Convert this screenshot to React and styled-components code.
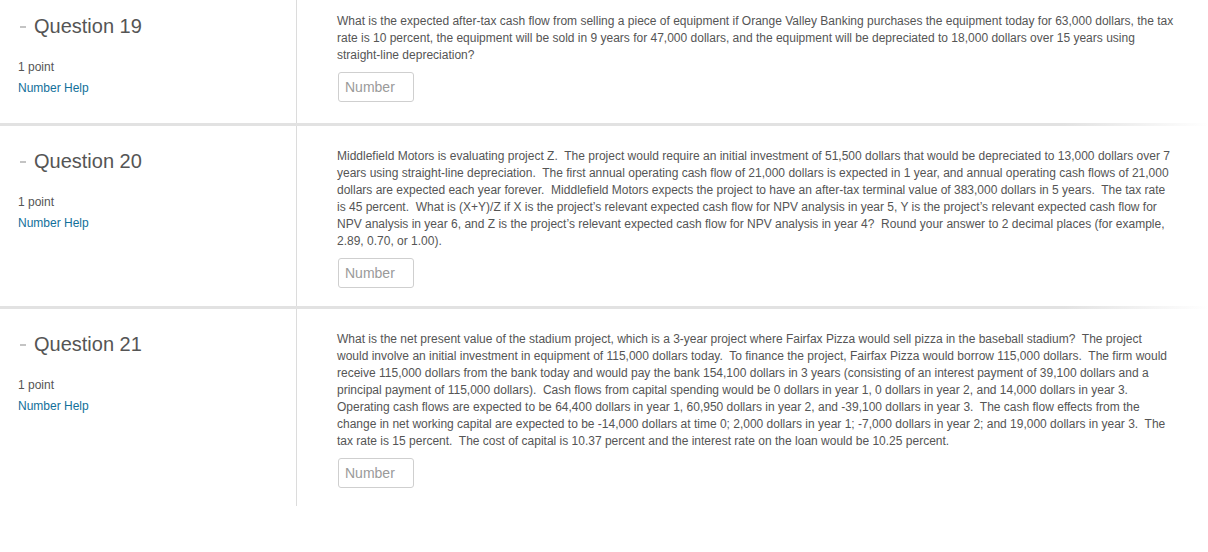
import React from 'react'
import styled, { createGlobalStyle } from 'styled-components'

const Global = createGlobalStyle`
  html, body {
    margin: 0;
    padding: 0;
    background: #fff;
  }
  body {
    font-family: "Liberation Sans", Arial, Helvetica, sans-serif;
    color: #555;
  }
`

const Page = styled.div`
  width: 1208px;
  height: 552px;
  overflow: hidden;
  background: #fff;
`
const Section = styled.div`
  display: flex;
`
const Separator = styled.div`
  height: 3px;
  background: linear-gradient(
    to right,
    #e2e2e2 0%,
    #e2e2e2 88%,
    #f3f3f3 95%,
    #fff 100%
  );
`
const Side = styled.div`
  width: 278px;
  flex: none;
  padding: ${p => (p.first ? '14px' : '23px')} 0 0 18px;
  border-right: 1px solid #dcdcdc;
`
const Title = styled.h2`
  margin: 0;
  font-size: 20px;
  line-height: 24px;
  font-weight: normal;
  color: #555;
  display: flex;
  align-items: center;
`
const Dash = styled.span`
  display: inline-block;
  width: 6px;
  height: 2px;
  margin: 1px 8px 0 2px;
  background: #c4c4c4;
`
const Points = styled.div`
  margin-top: 21px;
  font-size: 12px;
  line-height: 17px;
  color: #555;
`
const HelpLink = styled.a`
  display: block;
  margin-top: 4px;
  font-size: 12px;
  line-height: 17px;
  color: #12709a;
  text-decoration: none;
`
const Body = styled.div`
  padding: ${p => (p.first ? '13px' : '22px')} 0 ${p => (p.first ? '21px' : '18px')} 40px;
`
const Prompt = styled.p`
  margin: 0;
  width: 838px;
  font-size: 12px;
  line-height: 17px;
  color: #555;
  white-space: pre-wrap;
`
const NumberInput = styled.input`
  display: block;
  box-sizing: border-box;
  margin: 8px 0 0 1px;
  width: 76px;
  height: 30px;
  padding: 0 6px;
  border: 1px solid #cfcfcf;
  border-radius: 3px;
  font-family: inherit;
  font-size: 14px;
  color: #555;
  &::placeholder {
    color: #9a9a9a;
  }
`

const questions = [
  {
    n: 19,
    text:
      'What is the expected after-tax cash flow from selling a piece of equipment if Orange Valley Banking purchases the equipment today for 63,000 dollars, the tax rate is 10 percent, the equipment will be sold in 9 years for 47,000 dollars, and the equipment will be depreciated to 18,000 dollars over 15 years using straight-line depreciation?'
  },
  {
    n: 20,
    text:
      'Middlefield Motors is evaluating project Z.  The project would require an initial investment of 51,500 dollars that would be depreciated to 13,000 dollars over 7 years using straight-line depreciation.  The first annual operating cash flow of 21,000 dollars is expected in 1 year, and annual operating cash flows of 21,000 dollars are expected each year forever.  Middlefield Motors expects the project to have an after-tax terminal value of 383,000 dollars in 5 years.  The tax rate is 45 percent.  What is (X+Y)/Z if X is the project’s relevant expected cash flow for NPV analysis in year 5, Y is the project’s relevant expected cash flow for NPV analysis in year 6, and Z is the project’s relevant expected cash flow for NPV analysis in year 4?  Round your answer to 2 decimal places (for example, 2.89, 0.70, or 1.00).'
  },
  {
    n: 21,
    text:
      'What is the net present value of the stadium project, which is a 3-year project where Fairfax Pizza would sell pizza in the baseball stadium?  The project would involve an initial investment in equipment of 115,000 dollars today.  To finance the project, Fairfax Pizza would borrow 115,000 dollars.  The firm would receive 115,000 dollars from the bank today and would pay the bank 154,100 dollars in 3 years (consisting of an interest payment of 39,100 dollars and a principal payment of 115,000 dollars).  Cash flows from capital spending would be 0 dollars in year 1, 0 dollars in year 2, and 14,000 dollars in year 3.  Operating cash flows are expected to be 64,400 dollars in year 1, 60,950 dollars in year 2, and -39,100 dollars in year 3.  The cash flow effects from the change in net working capital are expected to be -14,000 dollars at time 0; 2,000 dollars in year 1; -7,000 dollars in year 2; and 19,000 dollars in year 3.  The tax rate is 15 percent.  The cost of capital is 10.37 percent and the interest rate on the loan would be 10.25 percent.'
  }
]

const Question = ({ n, text, first }) => (
  <Section>
    <Side first={first}>
      <Title>
        <Dash />
        Question {n}
      </Title>
      <Points>1 point</Points>
      <HelpLink href='#'>Number Help</HelpLink>
    </Side>
    <Body first={first}>
      <Prompt>{text}</Prompt>
      <NumberInput type='text' placeholder='Number' />
    </Body>
  </Section>
)

export default function App () {
  return (
    <>
      <Global />
      <Page>
        {questions.map((q, i) => (
          <React.Fragment key={q.n}>
            {i > 0 && <Separator />}
            <Question {...q} first={i === 0} />
          </React.Fragment>
        ))}
      </Page>
    </>
  )
}
